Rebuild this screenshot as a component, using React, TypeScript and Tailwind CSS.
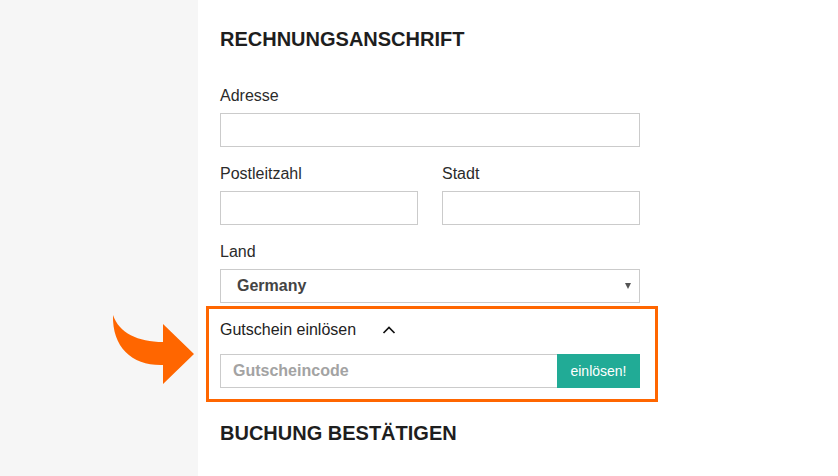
const font = { fontFamily: '"Liberation Sans", Arial, sans-serif' };

const Label = ({ text }: { text: string }) => (
  <div className="mb-[6px] h-[22px] text-[16px] leading-[22px] text-[#2b2b2b]">{text}</div>
);

const Field = ({ label }: { label: string }) => (
  <div>
    <Label text={label} />
    <input
      type="text"
      className="block h-[34px] w-full border border-[#cbcbcb] bg-white outline-none"
    />
  </div>
);

export default function App() {
  return (
    <div className="relative flex h-[476px] w-[838px] bg-white" style={font}>
      <aside className="w-[198px] shrink-0 bg-[#f6f6f6]" />

      {/* Annotation arrow */}
      <svg
        className="absolute left-[110px] top-[312px]"
        width="88"
        height="76"
        viewBox="110 312 88 76"
      >
        <path
          d="M113 315 C119 333 138 342 163 342 L163 324 L194 354 L163 384 L163 365 C133 366 112 348 113 315 Z"
          fill="#ff6600"
        />
      </svg>

      <main className="pl-[22px] pt-[27px]">
        <div className="w-[420px]">
          <h2 className="h-6 text-[20px] font-bold leading-6 text-[#1e1e1e]">
            RECHNUNGSANSCHRIFT
          </h2>

          <div className="mt-[34px] flex flex-col gap-4">
            <Field label="Adresse" />
            <div className="grid grid-cols-2 gap-6">
              <Field label="Postleitzahl" />
              <Field label="Stadt" />
            </div>
            <div>
              <Label text="Land" />
              <div className="flex h-[34px] items-center justify-between border border-[#cbcbcb] pl-4 pr-2">
                <span className="text-[16px] font-bold text-[#444]">Germany</span>
                <svg width="6" height="6" viewBox="0 0 6 6">
                  <polygon points="0,0 6,0 3,6" fill="#555" />
                </svg>
              </div>
            </div>
          </div>
        </div>

        <div className="-ml-[14px] mt-[3px] w-[452px] border-[3px] border-[#ff6600] pb-[11px] pl-[11px] pr-[15px] pt-[10px]">
          <div className="flex h-5 items-center pt-px text-[16px] leading-5 text-[#222]">
            <span>Gutschein einlösen</span>
            <svg className="ml-[26px]" width="14" height="8" viewBox="0 0 14 8">
              <path d="M1.5 7 L7 1.5 L12.5 7" fill="none" stroke="#111" strokeWidth="1.7" />
            </svg>
          </div>
          <div className="mt-[15px] flex h-[34px]">
            <input
              type="text"
              placeholder="Gutscheincode"
              className="h-full flex-1 border border-r-0 border-[#cbcbcb] pl-3 text-[16px] font-bold outline-none placeholder:text-[#a3a3a3]"
            />
            <button className="h-full w-[83px] bg-[#21ab96] text-[14px] text-white">
              einlösen!
            </button>
          </div>
        </div>

        <h2 className="mt-[19px] h-6 text-[20px] font-bold leading-6 text-[#1e1e1e]">
          BUCHUNG BESTÄTIGEN
        </h2>
      </main>
    </div>
  );
}
